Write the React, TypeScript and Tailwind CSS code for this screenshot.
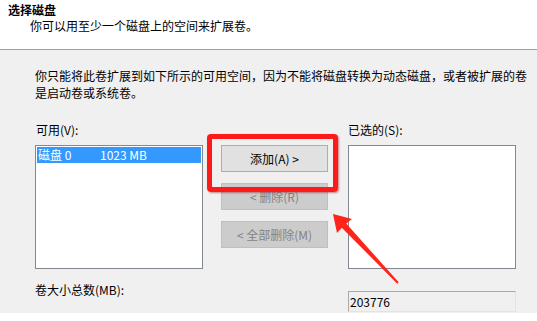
import React from "react";

export default function App() {
  return (
    <div
      className="relative w-[537px] h-[321px] flex flex-col bg-[#f0f0f0] text-black text-[12px] overflow-hidden"
      style={{ fontFamily: '"Noto Sans CJK SC", "Noto Sans", sans-serif' }}
    >
      {/* header */}
      <div className="h-[50px] shrink-0 bg-white border-b border-[#a0a0a0] pl-[8px] pt-[2px]">
        <div className="font-bold leading-[16px]">选择磁盘</div>
        <div className="pl-[22px] leading-[16px]">你可以用至少一个磁盘上的空间来扩展卷。</div>
      </div>

      {/* body */}
      <div className="shrink-0 pl-[35px] pt-[17px] pb-[1px]">
        <div className="leading-[17px] whitespace-nowrap">
          <div>你只能将此卷扩展到如下所示的可用空间，因为不能将磁盘转换为动态磁盘，或者被扩展的卷</div>
          <div>是启动卷或系统卷。</div>
        </div>

        <div className="grid grid-cols-[168px_18px_107px_20px_168px] mt-[20px]">
          <div className="leading-[17px] pl-[1px] col-span-4">可用(V):</div>
          <div className="leading-[17px]">已选的(S):</div>

          <div className="mt-[7px] h-[124px] bg-white border border-[#828790] p-[1px]">
            <div className="h-[16px] bg-[#3399ff] text-white leading-[16px] flex pl-[1px]">
              <span className="w-[62px]">磁盘 0</span>
              <span>1023 MB</span>
            </div>
          </div>
          <div />
          <div className="mt-[7px] flex flex-col gap-[11px]">
            <div className="h-[27px] bg-[#e1e1e1] border border-[#adadad] flex items-center justify-center leading-none">
              添加(A) &gt;
            </div>
            <div className="h-[27px] bg-[#cccccc] border border-[#bfbfbf] text-[#838383] flex items-center justify-center leading-none">
              &lt; 删除(R)
            </div>
            <div className="h-[27px] bg-[#cccccc] border border-[#bfbfbf] text-[#838383] flex items-center justify-center leading-none">
              &lt; 全部删除(M)
            </div>
          </div>
          <div />
          <div className="mt-[7px] h-[124px] bg-white border border-[#828790]" />

          <div className="mt-[12px] leading-[17px] col-span-4">卷大小总数(MB):</div>
          <div className="mt-[22px] h-[21px] bg-[#f0f0f0] border border-t-[#a9a9a9] border-l-[#a9a9a9] border-r-[#e3e3e3] border-b-[#e3e3e3] flex items-center pl-[1px] leading-none">
            203776
          </div>
        </div>
      </div>

      <div className="flex-1 bg-white" />

      {/* annotation: red rectangle */}
      <div className="absolute left-[207px] top-[134px] w-[131px] h-[58px] border-[5px] border-[#ff1a1a] rounded-[4px] shadow-[1px_1px_2px_rgba(140,0,0,0.45)]" />

      {/* annotation: arrow */}
      <svg className="absolute left-0 top-0" width="537" height="321" viewBox="0 0 537 321">
        <polygon
          points="333,214 352,219 346.2,223.5 398.7,282.3 397.3,283.7 341.8,227.7 337,233"
          fill="#ff2419"
        />
      </svg>
    </div>
  );
}
